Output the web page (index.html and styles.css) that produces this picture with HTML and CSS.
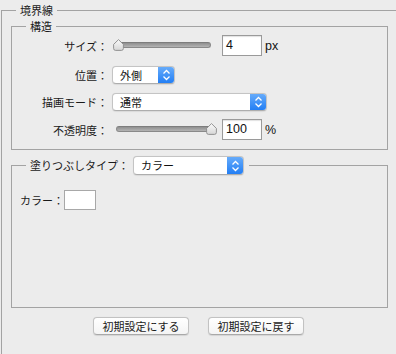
FILE: index.html
```html
<!DOCTYPE html>
<html lang="ja">
<head>
<meta charset="utf-8">
<link rel="stylesheet" href="styles.css">
</head>
<body>
<fieldset class="outer">
  <legend class="lg lg-outer">境界線</legend>

  <fieldset class="group struct">
    <legend class="lg">構造</legend>
    <div class="rows">
      <div class="row r-size">
        <span class="lbl">サイズ：</span>
        <div class="slider">
          <div class="track"></div>
          <svg class="thumb thumb-left" width="11" height="12" viewBox="0 0 11 12"><defs><linearGradient id="tg1" x1="0" y1="0" x2="0" y2="1"><stop offset="0" stop-color="#fbfbfb"/><stop offset="1" stop-color="#d6d6d6"/></linearGradient></defs><path d="M5.5 0.6 L10.4 5.4 V9.4 Q10.4 11.4 8.4 11.4 H2.6 Q0.6 11.4 0.6 9.4 V5.4 Z" fill="url(#tg1)" stroke="#8a8a8a" stroke-width="0.9"/></svg>
        </div>
        <div class="num">4</div>
        <span class="unit">px</span>
      </div>
      <div class="row r-pos">
        <span class="lbl">位置：</span>
        <div class="popup w-pos"><span class="ptext">外側</span><span class="parrow"><svg width="9" height="12" viewBox="0 0 9 12"><path d="M1.5 4.5 L4.5 1.5 L7.5 4.5 M1.5 7.5 L4.5 10.5 L7.5 7.5" fill="none" stroke="#fff" stroke-width="1.3"/></svg></span></div>
      </div>
      <div class="row r-mode">
        <span class="lbl">描画モード：</span>
        <div class="popup w-mode"><span class="ptext">通常</span><span class="parrow"><svg width="9" height="12" viewBox="0 0 9 12"><path d="M1.5 4.5 L4.5 1.5 L7.5 4.5 M1.5 7.5 L4.5 10.5 L7.5 7.5" fill="none" stroke="#fff" stroke-width="1.3"/></svg></span></div>
      </div>
      <div class="row r-opa">
        <span class="lbl">不透明度：</span>
        <div class="slider">
          <div class="track"></div>
          <svg class="thumb thumb-right" width="11" height="12" viewBox="0 0 11 12"><defs><linearGradient id="tg2" x1="0" y1="0" x2="0" y2="1"><stop offset="0" stop-color="#fbfbfb"/><stop offset="1" stop-color="#d6d6d6"/></linearGradient></defs><path d="M5.5 0.6 L10.4 5.4 V9.4 Q10.4 11.4 8.4 11.4 H2.6 Q0.6 11.4 0.6 9.4 V5.4 Z" fill="url(#tg2)" stroke="#8a8a8a" stroke-width="0.9"/></svg>
        </div>
        <div class="num">100</div>
        <span class="unit">%</span>
      </div>
    </div>
  </fieldset>

  <fieldset class="group fill">
    <legend class="lg lg-sel">
      <span class="sel-label">塗りつぶしタイプ：</span>
      <div class="popup w-fill"><span class="ptext">カラー</span><span class="parrow"><svg width="9" height="12" viewBox="0 0 9 12"><path d="M1.5 4.5 L4.5 1.5 L7.5 4.5 M1.5 7.5 L4.5 10.5 L7.5 7.5" fill="none" stroke="#fff" stroke-width="1.3"/></svg></span></div>
    </legend>
    <div class="fill-body">
      <div class="color-row">
        <span class="clbl">カラー：</span>
        <div class="swatch"></div>
      </div>
    </div>
  </fieldset>

  <div class="buttons">
    <button class="btn">初期設定にする</button>
    <button class="btn">初期設定に戻す</button>
  </div>
</fieldset>
</body>
</html>
```

FILE: styles.css
```css
html, body {
  margin: 0;
  padding: 0;
  background: #ececec;
  overflow: hidden;
  width: 396px;
  height: 354px;
}

body {
  font-family: "Noto Sans CJK JP", "Noto Sans", sans-serif;
  font-size: 11px;
  color: #1a1a1a;
}

fieldset {
  min-inline-size: 0;
  min-width: 0;
}

.outer {
  margin: 3px 0 0 1px;
  padding: 0;
  border: 1px solid #a3a3a3;
  border-right: none;
  border-bottom: none;
  width: 395px;
  height: 351px;
  box-sizing: border-box;
}

.lg {
  margin-left: 14px;
  padding: 0 4px;
  line-height: 14px;
  height: 14px;
}

.lg-outer {
  margin-left: 14px;
}

.group {
  margin: 0 0 0 9px;
  padding: 0;
  width: 377px;
  box-sizing: border-box;
  border: 1px solid #a3a3a3;
}

.struct {
  margin-top: 2px;
}

.rows {
  display: flex;
  flex-direction: column;
  padding: 2px 0 9px 0;
}

.row {
  display: flex;
  align-items: center;
}

.r-size { height: 21px; }
.r-pos { height: 20px; margin-top: 9px; }
.r-mode { height: 20px; margin-top: 7px; }
.r-opa { height: 21px; margin-top: 7px; }

.lbl {
  width: 96px;
  text-align: right;
  line-height: 14px;
  margin-right: 4px;
  flex: none;
}

.r-size .lbl, .r-opa .lbl {
  margin-right: 5px;
}

.slider {
  position: relative;
  width: 104px;
  height: 13px;
  flex: none;
}

.track {
  position: absolute;
  left: 3px;
  right: 6px;
  top: 3px;
  height: 4px;
  border-radius: 3px;
  background: linear-gradient(#8f8f8f, #b4b4b4);
  border: 1px solid #8a8a8a;
  border-top-color: #7d7d7d;
}

.thumb {
  position: absolute;
  top: 0;
}

.thumb-left { left: 0; }
.thumb-right { right: 0; }

.num {
  margin-left: 5px;
  width: 40px;
  height: 21px;
  box-sizing: border-box;
  background: #fff;
  border: 1px solid #9a9a9a;
  box-shadow: inset 0 1px 1px rgba(0,0,0,0.12);
  font-family: "Liberation Sans", Arial, sans-serif;
  font-size: 12.5px;
  line-height: 19px;
  padding-left: 3px;
  color: #111;
  flex: none;
}

.unit {
  margin-left: 3px;
  font-family: "Liberation Sans", Arial, sans-serif;
  font-size: 12.5px;
  color: #111;
}

.popup {
  display: flex;
  height: 18px;
  box-sizing: border-box;
  border: 1px solid #c4c4c4;
  border-bottom-color: #adadad;
  border-radius: 4px;
  background: #fff;
  box-shadow: 0 0.5px 1px rgba(0,0,0,0.08);
  overflow: hidden;
  flex: none;
}

.ptext {
  flex: 1;
  padding-left: 7px;
  line-height: 16px;
  color: #111;
}

.parrow {
  width: 17px;
  display: flex;
  align-items: center;
  justify-content: center;
  background: linear-gradient(#6aaefb, #1f7cf4);
  margin: -1px -1px -1px 0;
}

.w-pos { width: 63px; }
.w-mode { width: 155px; }
.w-fill { width: 111px; height: 19px; }
.w-fill .ptext { line-height: 17px; }

.fill {
  margin-top: 6px;
}

.lg-sel {
  display: flex;
  align-items: center;
  height: 19px;
  line-height: 19px;
  padding: 0 5px 0 4px;
}

.sel-label {
  margin-right: 4px;
}

.fill-body {
  height: 132px;
  box-sizing: border-box;
  padding: 15px 0 0 8px;
}

.color-row {
  display: flex;
  align-items: center;
  height: 20px;
}

.clbl {
  line-height: 14px;
}

.swatch {
  width: 32px;
  height: 20px;
  box-sizing: border-box;
  background: #fff;
  border: 1px solid #a8a8a8;
}

.buttons {
  display: flex;
  justify-content: center;
  gap: 19px;
  margin-top: 9px;
  padding-right: 1px;
}

.btn {
  width: 96px;
  height: 18px;
  padding: 0;
  font-family: "Noto Sans CJK JP", "Noto Sans", sans-serif;
  font-size: 11px;
  line-height: 16px;
  color: #1a1a1a;
  background: linear-gradient(#ffffff, #f4f4f4);
  border: 1px solid #c2c2c2;
  border-bottom-color: #a9a9a9;
  border-radius: 4px;
  box-shadow: 0 0.5px 1px rgba(0,0,0,0.1);
}
```
